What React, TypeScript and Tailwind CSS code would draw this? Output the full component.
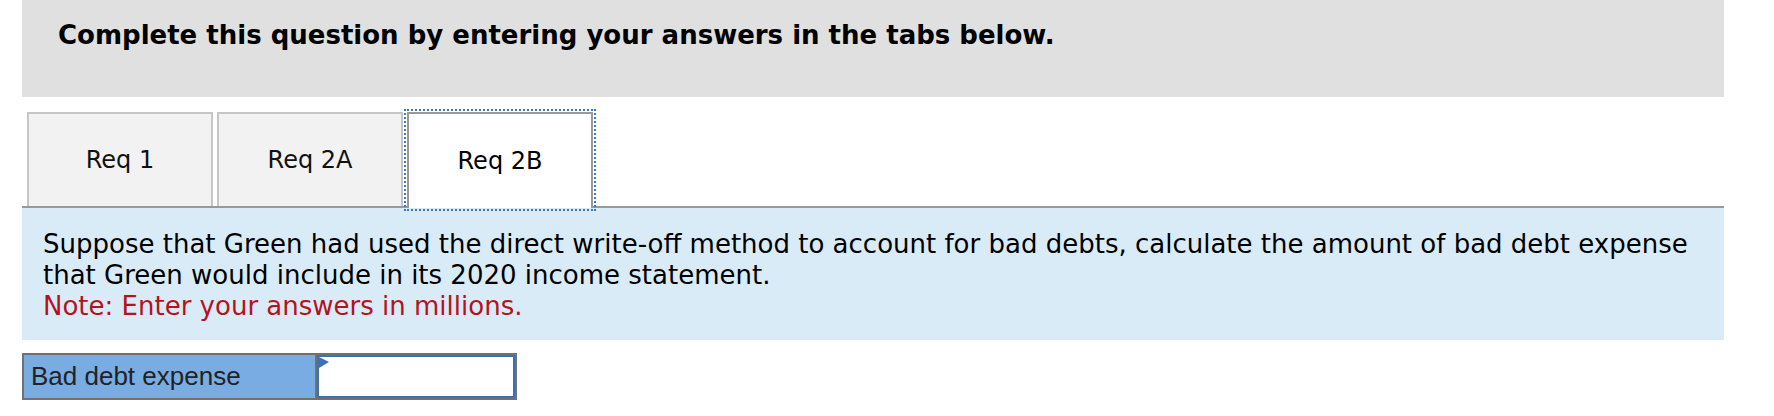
import React from 'react';

const tabs = ['Req 1', 'Req 2A', 'Req 2B'];

const App: React.FC = () => {
  const active = 2;

  return (
    <div className="w-[1702px] ml-[22px] bg-white text-black">
      <div className="h-[97px] bg-[#e0e0e0] pl-[36px] pt-[20px]">
        <h1 className="font-['DejaVu_Sans',sans-serif] font-bold text-[26px] leading-[30px]">
          Complete this question by entering your answers in the tabs below.
        </h1>
      </div>

      <div className="mt-[15px] pl-[5px] flex items-end border-b-2 border-[#999999]">
        {tabs.map((t, i) =>
          i === active ? (
            <div
              key={t}
              className="relative z-10 -mb-[2px] w-[186px] h-[96px] bg-white border-2 border-b-0 border-[#999999] outline-2 outline-dotted outline-[#3a78c4] outline-offset-1 flex items-center justify-center font-['DejaVu_Sans',sans-serif] text-[24px]"
            >
              {t}
            </div>
          ) : (
            <div
              key={t}
              className="mr-[4px] w-[186px] h-[94px] bg-[#f2f2f2] border-2 border-b-0 border-[#c6c6c6] flex items-center justify-center font-['DejaVu_Sans',sans-serif] text-[24px] text-[#111]"
            >
              {t}
            </div>
          )
        )}
      </div>

      <div className="bg-[#daebf8] pl-[21px] pr-[21px] pt-[21px] pb-[18px] font-['DejaVu_Sans',sans-serif] text-[26px] leading-[31px]">
        <p>
          Suppose that Green had used the direct write-off method to account for bad debts, calculate the amount of bad debt expense
          <br />
          that Green would include in its 2020 income statement.
        </p>
        <p className="text-[#b5121b]">Note: Enter your answers in millions.</p>
      </div>

      <div className="mt-[13px] flex w-[495px] h-[47px] border-2 border-[#717171]">
        <div className="w-[293px] bg-[#78ace2] border-r-2 border-[#717171] pl-[7px] flex items-center font-['Liberation_Sans',Arial,sans-serif] text-[26px] text-[#222]">
          Bad debt expense
        </div>
        <div className="relative flex-1 bg-white border-2 border-[#3b72b6]">
          <svg className="absolute left-0 top-0" width="10" height="11" viewBox="0 0 10 11">
            <polygon points="0,0 10,5 0,11" fill="#3b72b6" />
          </svg>
        </div>
      </div>
    </div>
  );
};

export default App;
